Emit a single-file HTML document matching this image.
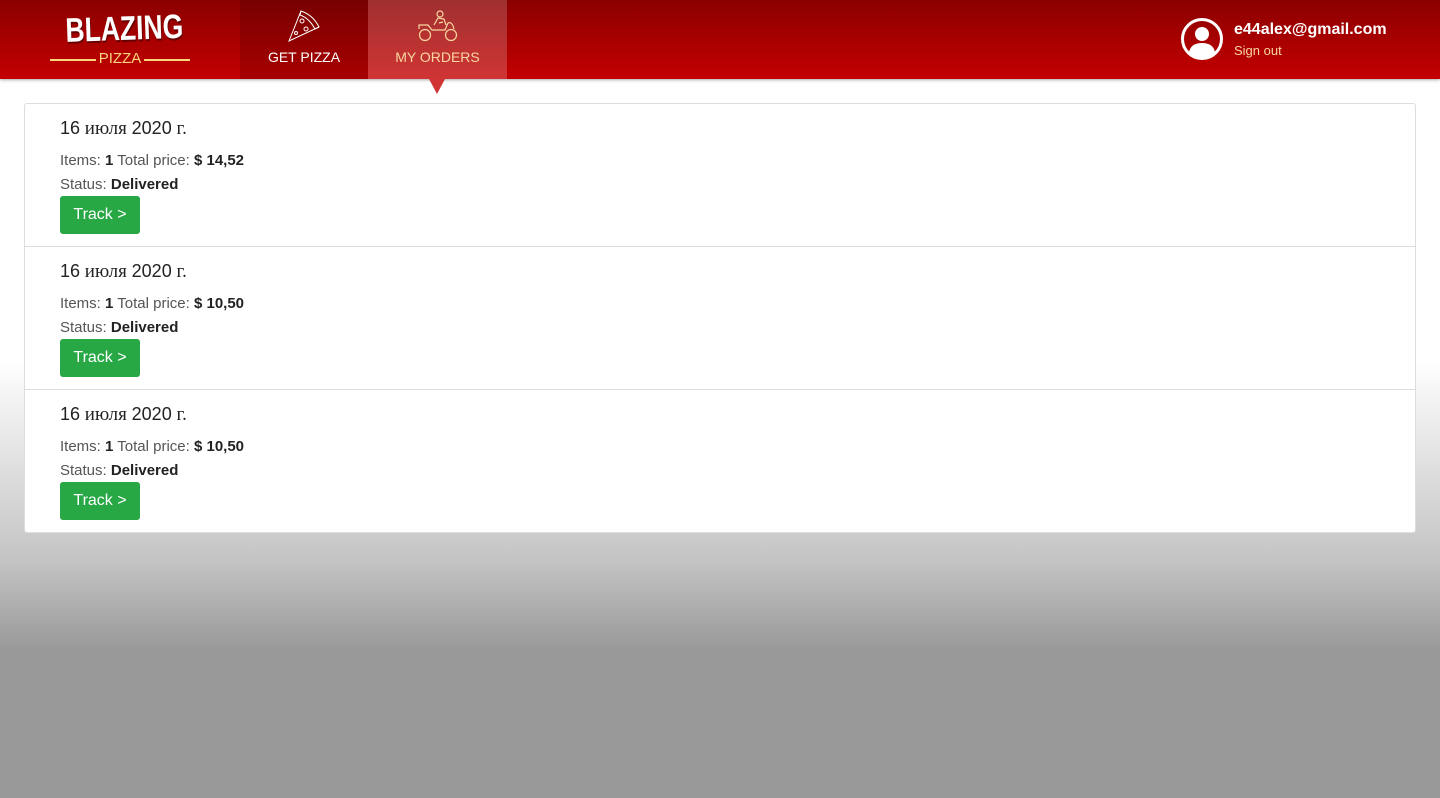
<!DOCTYPE html>
<html><head><meta charset="utf-8"><style>
body{margin:0;width:1440px;height:798px;overflow:hidden;font-family:"Liberation Sans",sans-serif;background:linear-gradient(#fff 0,#fff 360px,#c4c4c4 560px,#999 650px,#999 798px);}
.top{position:absolute;left:0;top:0;width:1440px;height:79px;background:linear-gradient(#8b0000,#c40000);box-shadow:0 1px 3px rgba(0,0,0,.35);}
.logo{position:absolute;left:50px;top:12px;width:140px;text-align:center;color:#fff}
.logo .b{font-family:"Liberation Sans",sans-serif;font-weight:bold;font-size:34px;line-height:34px;transform:rotate(-2deg) scaleX(0.78);text-shadow:1px 2px 0 #600;display:block}
.logo .p{color:#f8d77a;margin-top:4px;position:relative;font-family:"Liberation Sans",sans-serif;font-size:15px}
.logo .p:before,.logo .p:after{content:"";position:absolute;top:9px;width:46px;height:2px;background:#f8d77a}
.logo .p:before{left:0}.logo .p:after{right:0}
.nav{position:absolute;top:0;height:79px;color:#fff;font-size:14px;text-align:center}
.n1{left:240px;width:128px;background:linear-gradient(#780000,#a80000)}
.n2{left:368px;width:139px;background:linear-gradient(#a03030,#d03434);color:#f8d7a0}
.nav svg{position:absolute;left:50%;top:9px;transform:translateX(-50%)}
.nav span{position:absolute;left:0;right:0;top:49px}
.arrow{position:absolute;left:429px;top:79px;border-left:8px solid transparent;border-right:8px solid transparent;border-top:15px solid #d03434}
.user{position:absolute;left:1181px;top:18px;color:#fff}
.user .t{position:absolute;left:53px;top:3px;font-weight:bold;font-size:16px;white-space:nowrap}
.user .s{position:absolute;left:53px;top:25px;font-size:13px;color:#f8d7a0;white-space:nowrap}
.card{position:absolute;left:24px;top:103px;width:1390px;height:428px;background:#fff;border:1px solid #ddd;border-radius:3px}
.row{height:142px;border-bottom:1px solid #ddd;position:relative}
.row:last-child{border-bottom:none}
.d{position:absolute;left:35px;top:14px;font-family:"Liberation Serif",serif;font-size:19px;color:#222}
.d .n{font-family:"Liberation Sans",sans-serif;font-size:18px}
.l1,.l2{position:absolute;left:35px;font-size:15px;color:#555}
.l1{top:48px}.l2{top:72px}
.l1 b,.l2 b{color:#222}
.btn{position:absolute;left:35px;top:92px;width:80px;height:38px;background:#28a745;border-radius:3px;color:#fff;font-size:16px;line-height:38px;text-align:center}
</style></head><body>
<div class="top">
<div class="logo"><span class="b">BLAZING</span><div class="p">PIZZA</div></div>
<div class="nav n1"><svg width="34" height="34" viewBox="0 0 34 34" fill="none" stroke="#fff" stroke-width="1"><path d="M2 32 L14 2 Q26 6 32 18 Z"/><path d="M14 2 L13 6 Q22 9 28 20 L32 18"/><circle cx="15" cy="12" r="2"/><circle cx="19" cy="20" r="2"/><circle cx="9" cy="24" r="1.5"/></svg><span>GET PIZZA</span></div>
<div class="nav n2"><svg width="40" height="34" viewBox="0 0 40 34" fill="none" stroke="#f8d7a0" stroke-width="1.2"><circle cx="7" cy="26" r="5.5"/><circle cx="33" cy="26" r="5.5"/><circle cx="22" cy="5" r="3"/><path d="M1 20 L1 16 L10 16 L14 21 L27 21 L30 14 Q34 12 36 20"/><path d="M16 16 L20 9 L26 10 L28 16"/><path d="M21 14 L25 13"/></svg><span>MY ORDERS</span></div>
<div class="user"><svg width="42" height="42" viewBox="0 0 42 42"><circle cx="21" cy="21" r="19.5" fill="none" stroke="#fff" stroke-width="3"/><circle cx="21" cy="16" r="7" fill="#fff"/><path d="M8 34 Q10 25 21 25 Q32 25 34 34 Q28 40 21 40 Q14 40 8 34Z" fill="#fff"/></svg><div class="t">e44alex@gmail.com</div><div class="s">Sign out</div></div>
</div>
<div class="arrow"></div>
<div class="card">
<div class="row"><div class="d"><span class="n">16</span> июля <span class="n">2020</span> г.</div><div class="l1">Items: <b>1</b> Total price: <b>$ 14,52</b></div><div class="l2">Status: <b>Delivered</b></div><div class="btn">Track &gt;</div></div>
<div class="row"><div class="d"><span class="n">16</span> июля <span class="n">2020</span> г.</div><div class="l1">Items: <b>1</b> Total price: <b>$ 10,50</b></div><div class="l2">Status: <b>Delivered</b></div><div class="btn">Track &gt;</div></div>
<div class="row"><div class="d"><span class="n">16</span> июля <span class="n">2020</span> г.</div><div class="l1">Items: <b>1</b> Total price: <b>$ 10,50</b></div><div class="l2">Status: <b>Delivered</b></div><div class="btn">Track &gt;</div></div>
</div>
</body></html>
